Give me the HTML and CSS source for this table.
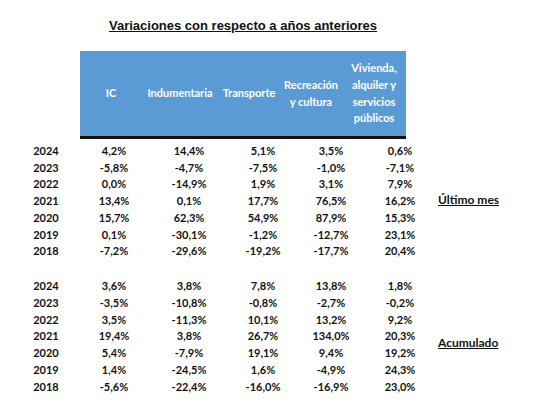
FILE: index.html
```html
<!DOCTYPE html>
<html lang="es">
<head>
  <meta charset="UTF-8" />
  <title>Variaciones con respecto a años anteriores</title>
  <link rel="stylesheet" href="styles.css">
</head>
<body>
  <div class="sheet">
    <h1 class="title">Variaciones con respecto a años anteriores</h1>

    <div class="head">
      <div>IC</div>
      <div>Indumentaria</div>
      <div>Transporte</div>
      <div>Recreación<br>y cultura</div>
      <div>Vivienda,<br>alquiler y<br>servicios<br>públicos</div>
    </div>

    <div class="block">
      <div class="rows">
        <div class="row"><div>2024</div><div>4,2%</div><div>14,4%</div><div>5,1%</div><div>3,5%</div><div>0,6%</div></div>
        <div class="row"><div>2023</div><div>-5,8%</div><div>-4,7%</div><div>-7,5%</div><div>-1,0%</div><div>-7,1%</div></div>
        <div class="row"><div>2022</div><div>0,0%</div><div>-14,9%</div><div>1,9%</div><div>3,1%</div><div>7,9%</div></div>
        <div class="row"><div>2021</div><div>13,4%</div><div>0,1%</div><div>17,7%</div><div>76,5%</div><div>16,2%</div></div>
        <div class="row"><div>2020</div><div>15,7%</div><div>62,3%</div><div>54,9%</div><div>87,9%</div><div>15,3%</div></div>
        <div class="row"><div>2019</div><div>0,1%</div><div>-30,1%</div><div>-1,2%</div><div>-12,7%</div><div>23,1%</div></div>
        <div class="row"><div>2018</div><div>-7,2%</div><div>-29,6%</div><div>-19,2%</div><div>-17,7%</div><div>20,4%</div></div>
      </div>
      <div class="label label-month">Último mes</div>
    </div>

    <div class="block second">
      <div class="rows">
        <div class="row"><div>2024</div><div>3,6%</div><div>3,8%</div><div>7,8%</div><div>13,8%</div><div>1,8%</div></div>
        <div class="row"><div>2023</div><div>-3,5%</div><div>-10,8%</div><div>-0,8%</div><div>-2,7%</div><div>-0,2%</div></div>
        <div class="row"><div>2022</div><div>3,5%</div><div>-11,3%</div><div>10,1%</div><div>13,2%</div><div>9,2%</div></div>
        <div class="row"><div>2021</div><div>19,4%</div><div>3,8%</div><div>26,7%</div><div>134,0%</div><div>20,3%</div></div>
        <div class="row"><div>2020</div><div>5,4%</div><div>-7,9%</div><div>19,1%</div><div>9,4%</div><div>19,2%</div></div>
        <div class="row"><div>2019</div><div>1,4%</div><div>-24,5%</div><div>1,6%</div><div>-4,9%</div><div>24,3%</div></div>
        <div class="row"><div>2018</div><div>-5,6%</div><div>-22,4%</div><div>-16,0%</div><div>-16,9%</div><div>23,0%</div></div>
      </div>
      <div class="label label-acum">Acumulado</div>
    </div>
  </div>
</body>
</html>
```

FILE: styles.css
```css
body {
  margin: 0;
  background: #fff;
  color: #111;
  font-family: Lato, "Open Sans", sans-serif;
  font-weight: 700;
  font-size: 11px;
}

.sheet {
  padding: 18px 0 0 12px;
  width: 540px;
}

.title {
  margin: 0 0 17px 0;
  width: 462px;
  text-align: center;
  font-family: "Liberation Sans", Arial, sans-serif;
  font-size: 13px;
  line-height: 16px;
  text-decoration: underline;
  color: #111;
}

.head {
  margin-left: 68px;
  width: 326px;
  height: 85px;
  display: grid;
  grid-template-columns: 62px 76px 62px 62px 64px;
  align-items: center;
  text-align: center;
  background-color: #5b9bd5;
  color: #fff;
  line-height: 16.7px;
  border-bottom: 3px solid #111;
}

.block {
  display: flex;
  margin-top: 3px;
}

.block.second {
  margin-top: 18px;
}

.row {
  display: grid;
  grid-template-columns: 68px 68px 82px 66px 70px 68px;
  height: 16.75px;
  align-items: center;
  text-align: center;
}

.label {
  padding-left: 4px;
  font-size: 12px;
  text-decoration: underline;
  line-height: 16.75px;
}

.label-month {
  margin-top: 50px;
}

.label-acum {
  margin-top: 58px;
}
```
